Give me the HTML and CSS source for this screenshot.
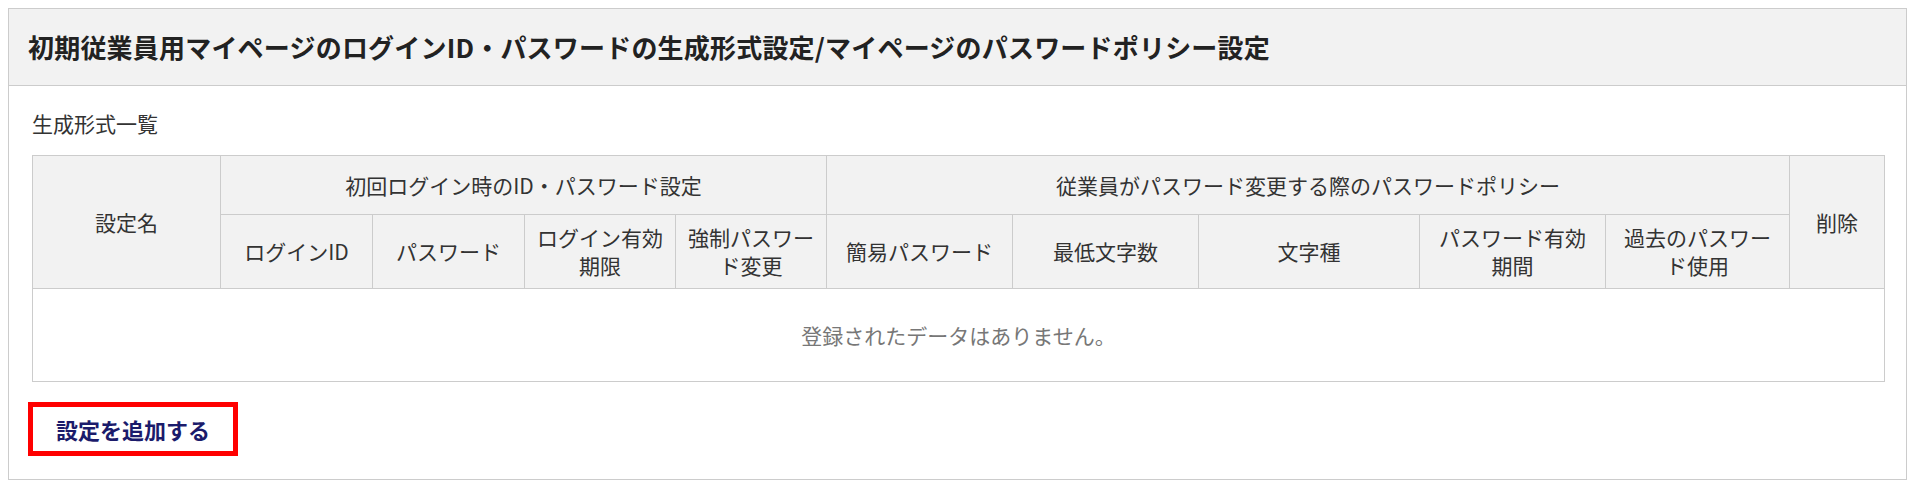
FILE: index.html
```html
<!DOCTYPE html>
<html lang="ja">
<head>
    <meta charset="UTF-8">
    <meta name="viewport" content="width=device-width, initial-scale=1.0">
    <title>ログインID・パスワード生成形式設定</title>
    <link rel="stylesheet" href="styles.css">
</head>
<body>
    <div class="panel">
        <div class="panel-header">
            <h1>初期従業員用マイページのログインID・パスワードの生成形式設定/マイページのパスワードポリシー設定</h1>
        </div>
        <div class="panel-body">
            <p class="list-title">生成形式一覧</p>
            <table class="format-table">
                <colgroup>
                    <col class="c-name">
                    <col class="c-s">
                    <col class="c-s">
                    <col class="c-s2">
                    <col class="c-s2">
                    <col class="c-m">
                    <col class="c-m">
                    <col class="c-l">
                    <col class="c-m">
                    <col class="c-m2">
                    <col class="c-del">
                </colgroup>
                <thead>
                    <tr class="group">
                        <th rowspan="2">設定名</th>
                        <th colspan="4">初回ログイン時のID・パスワード設定</th>
                        <th colspan="5">従業員がパスワード変更する際のパスワードポリシー</th>
                        <th rowspan="2">削除</th>
                    </tr>
                    <tr class="sub">
                        <th>ログインID</th>
                        <th>パスワード</th>
                        <th>ログイン有効期限</th>
                        <th>強制パスワード変更</th>
                        <th>簡易パスワード</th>
                        <th>最低文字数</th>
                        <th>文字種</th>
                        <th>パスワード有効期間</th>
                        <th>過去のパスワード使用</th>
                    </tr>
                </thead>
                <tbody>
                    <tr>
                        <td class="empty" colspan="11">登録されたデータはありません。</td>
                    </tr>
                </tbody>
            </table>
            <a href="#" class="add-btn">設定を追加する</a>
        </div>
    </div>
</body>
</html>
```

FILE: styles.css
```css
body {
    margin: 8px;
    font-family: "Noto Sans CJK JP", "Noto Sans", sans-serif;
    font-size: 21px;
    line-height: 28px;
    color: #333;
    background: #fff;
}

.panel {
    border: 1px solid #ccc;
    background: #fff;
}

.panel-header {
    background: #f2f2f2;
    border-bottom: 1px solid #ccc;
    padding: 20px 19px;
}
.panel-header h1 {
    margin: 0;
    font-size: 26px;
    line-height: 36px;
    letter-spacing: 0.2px;
    font-weight: bold;
    color: #222;
}

.panel-body { padding: 0 23px 23px; }

.list-title {
    margin: 23px 0 18px;
}

.format-table {
    width: 100%;
    table-layout: fixed;
    border-collapse: collapse;
}
.format-table th,
.format-table td {
    border: 1px solid #ccc;
    text-align: center;
    vertical-align: middle;
    font-weight: normal;
}
.format-table th {
    background: #f2f2f2;
    color: #333;
    padding: 8px 10px 9px;
}
.format-table .group th { padding: 15px 10px; }

.c-name { width: 188px; }
.c-s { width: 152px; }
.c-s2 { width: 151px; }
.c-m { width: 186px; }
.c-m2 { width: 184px; }
.c-l { width: 221px; }
.c-del { width: 95px; }

.format-table .empty {
    padding: 32px 8px;
    color: #777;
}

.add-btn {
    display: inline-block;
    margin: 20px 0 0 -4px;
    border: 5px solid #f00;
    padding: 0 23px;
    line-height: 44px;
    font-size: 22px;
    font-weight: bold;
    color: #1b1b6b;
    text-decoration: none;
}
```
